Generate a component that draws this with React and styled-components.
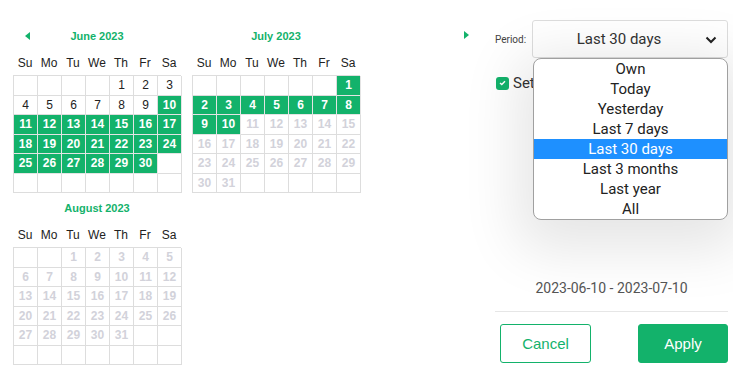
import React from 'react';
import styled, { createGlobalStyle } from 'styled-components';

const GREEN = '#13b26b';

const GlobalStyle = createGlobalStyle`
  body {
    margin: 0;
    background: #fff;
    font-family: "Liberation Sans", Arial, sans-serif;
  }
`;

const Page = styled.div`
  display: flex;
  width: 733px;
  height: 381px;
  overflow: hidden;
`;

const Calendars = styled.div`
  width: 480px;
  box-sizing: border-box;
  padding: 29px 11px 0 13px;
  display: grid;
  grid-template-columns: 168px 168px 1fr;
  column-gap: 11px;
  row-gap: 8px;
  align-content: start;
`;

const Month = styled.div`
  display: flex;
  flex-direction: column;
`;

const TitleRow = styled.div`
  display: grid;
  grid-template-columns: 24px 1fr 24px;
  align-items: center;
  height: 14px;
`;

const Title = styled.div`
  text-align: center;
  color: ${GREEN};
  font-size: 11px;
  font-weight: bold;
`;

const ArrowLeft = styled.div`
  width: 0;
  height: 0;
  margin-left: 12px;
  border-top: 4px solid transparent;
  border-bottom: 4px solid transparent;
  border-right: 5px solid ${GREEN};
`;

const ArrowRight = styled.div`
  justify-self: end;
  width: 0;
  height: 0;
  margin-top: 2px;
  border-top: 4px solid transparent;
  border-bottom: 4px solid transparent;
  border-left: 5px solid ${GREEN};
`;

const WeekDays = styled.div`
  display: grid;
  grid-template-columns: repeat(7, 24px);
  height: 24px;
  margin-top: 8px;
  align-items: center;
  font-size: 12px;
  color: #222;
  text-align: center;
`;

const Grid = styled.div`
  display: grid;
  grid-template-columns: repeat(7, 24px);
  grid-auto-rows: 19.5px;
  border-left: 1px solid #ddd;
  border-top: 1px solid #ddd;
  width: 168px;
  box-sizing: border-box;
`;

const Cell = styled.div`
  border-right: 1px solid #ddd;
  border-bottom: 1px solid #ddd;
  display: flex;
  align-items: center;
  justify-content: center;
  font-size: 12px;
  background: ${p => (p.$state === 'sel' ? GREEN : '#fff')};
  color: ${p => (p.$state === 'sel' ? '#fff' : p.$state === 'off' ? '#d2d2da' : '#222')};
  font-weight: ${p => (p.$state === 'normal' ? 'normal' : 'bold')};
  border-color: ${p => (p.$state === 'sel' ? '#e4e4e4' : '#ddd')};
`;

const Panel = styled.div`
  flex: 1;
  display: flex;
  flex-direction: column;
  padding: 20px 5px 18px 15px;
  font-family: Roboto, "Liberation Sans", sans-serif;
`;

const PeriodRow = styled.div`
  display: flex;
  align-items: center;
  gap: 5px;
`;

const Label = styled.span`
  font-size: 10px;
  color: #444;
  width: 32px;
`;

const SelectWrap = styled.div`
  position: relative;
  flex: 1;
`;

const SelectBox = styled.div`
  height: 38px;
  box-sizing: border-box;
  border: 1px solid #ddd;
  border-radius: 3px;
  padding-right: 22px;
  display: flex;
  align-items: center;
  justify-content: center;
  font-size: 15px;
  color: #333;
  position: relative;
`;

const Chevron = styled.svg`
  position: absolute;
  right: 10px;
  top: 15px;
`;

const List = styled.ul`
  position: absolute;
  top: 38px;
  left: 1px;
  right: 0;
  margin: 0;
  padding: 0;
  list-style: none;
  background: #fff;
  border: 1.5px solid #a0a0a0;
  border-radius: 8px;
  overflow: hidden;
  box-shadow: 0 14px 55px 16px rgba(0, 0, 0, 0.1);
  z-index: 2;
`;

const Option = styled.li`
  height: 20px;
  line-height: 20px;
  text-align: center;
  font-size: 15px;
  color: ${p => (p.$active ? '#fff' : '#222')};
  background: ${p => (p.$active ? '#1e90ff' : 'transparent')};
`;

const CheckRow = styled.div`
  display: flex;
  align-items: center;
  gap: 4px;
  margin-top: 16px;
  padding-left: 1px;
  font-size: 15px;
  color: #333;
`;

const Check = styled.span`
  width: 13px;
  height: 13px;
  border-radius: 3px;
  background: ${GREEN};
  display: flex;
  align-items: center;
  justify-content: center;
`;

const Range = styled.div`
  margin-top: auto;
  text-align: center;
  font-size: 14px;
  color: #555;
  line-height: 20px;
`;

const Divider = styled.div`
  height: 1px;
  background: #e6e6e6;
  margin: 13px 0 12px;
`;

const Buttons = styled.div`
  display: flex;
  justify-content: space-between;
  padding-left: 5px;
`;

const Button = styled.button`
  width: ${p => (p.$primary ? '90px' : '91px')};
  height: 39px;
  border-radius: 3px;
  border: 1px solid ${GREEN};
  background: ${p => (p.$primary ? GREEN : '#fff')};
  color: ${p => (p.$primary ? '#fff' : GREEN)};
  font-family: "Liberation Sans", Arial, sans-serif;
  font-size: 15px;
  cursor: pointer;
`;

const WEEK = ['Su', 'Mo', 'Tu', 'We', 'Th', 'Fr', 'Sa'];

const months = [
  { name: 'June 2023', start: 4, days: 30, sel: [10, 30], off: 99, left: true },
  { name: 'July 2023', start: 6, days: 31, sel: [1, 10], off: 11 },
  { name: 'August 2023', start: 2, days: 31, sel: [0, 0], off: 1 },
];

const buildCells = m => {
  const cells = [];
  for (let i = 0; i < 42; i++) {
    const d = i - m.start + 1;
    if (d < 1 || d > m.days) {
      cells.push({ key: i, label: '', state: 'empty' });
    } else {
      let state = 'normal';
      if (d >= m.sel[0] && d <= m.sel[1]) state = 'sel';
      else if (d >= m.off) state = 'off';
      cells.push({ key: i, label: d, state });
    }
  }
  return cells;
};

const MonthView = ({ m }) => (
  <Month>
    <TitleRow>
      {m.left ? <ArrowLeft /> : <span />}
      <Title>{m.name}</Title>
      <span />
    </TitleRow>
    <WeekDays>
      {WEEK.map(w => <div key={w}>{w}</div>)}
    </WeekDays>
    <Grid>
      {buildCells(m).map(c => (
        <Cell key={c.key} $state={c.state}>{c.label}</Cell>
      ))}
    </Grid>
  </Month>
);

const OPTIONS = ['Own', 'Today', 'Yesterday', 'Last 7 days', 'Last 30 days', 'Last 3 months', 'Last year', 'All'];

const App = () => (
  <Page>
    <GlobalStyle />
    <Calendars>
      <MonthView m={months[0]} />
      <MonthView m={months[1]} />
      <ArrowRight />
      <MonthView m={months[2]} />
    </Calendars>
    <Panel>
      <PeriodRow>
        <Label>Period:</Label>
        <SelectWrap>
          <SelectBox>
            Last 30 days
            <Chevron width="12" height="8" viewBox="0 0 12 8">
              <path d="M1.5 1.5 L6 6 L10.5 1.5" fill="none" stroke="#222" strokeWidth="2" />
            </Chevron>
          </SelectBox>
          <List>
            {OPTIONS.map(o => (
              <Option key={o} $active={o === 'Last 30 days'}>{o}</Option>
            ))}
          </List>
        </SelectWrap>
      </PeriodRow>
      <CheckRow>
        <Check>
          <svg width="7" height="6" viewBox="0 0 7 6">
            <path d="M1 3 L2.8 4.6 L6 1.2" fill="none" stroke="#fff" strokeWidth="1.4" />
          </svg>
        </Check>
        Set as default
      </CheckRow>
      <Range>2023-06-10 - 2023-07-10</Range>
      <Divider />
      <Buttons>
        <Button>Cancel</Button>
        <Button $primary>Apply</Button>
      </Buttons>
    </Panel>
  </Page>
);

export default App;
